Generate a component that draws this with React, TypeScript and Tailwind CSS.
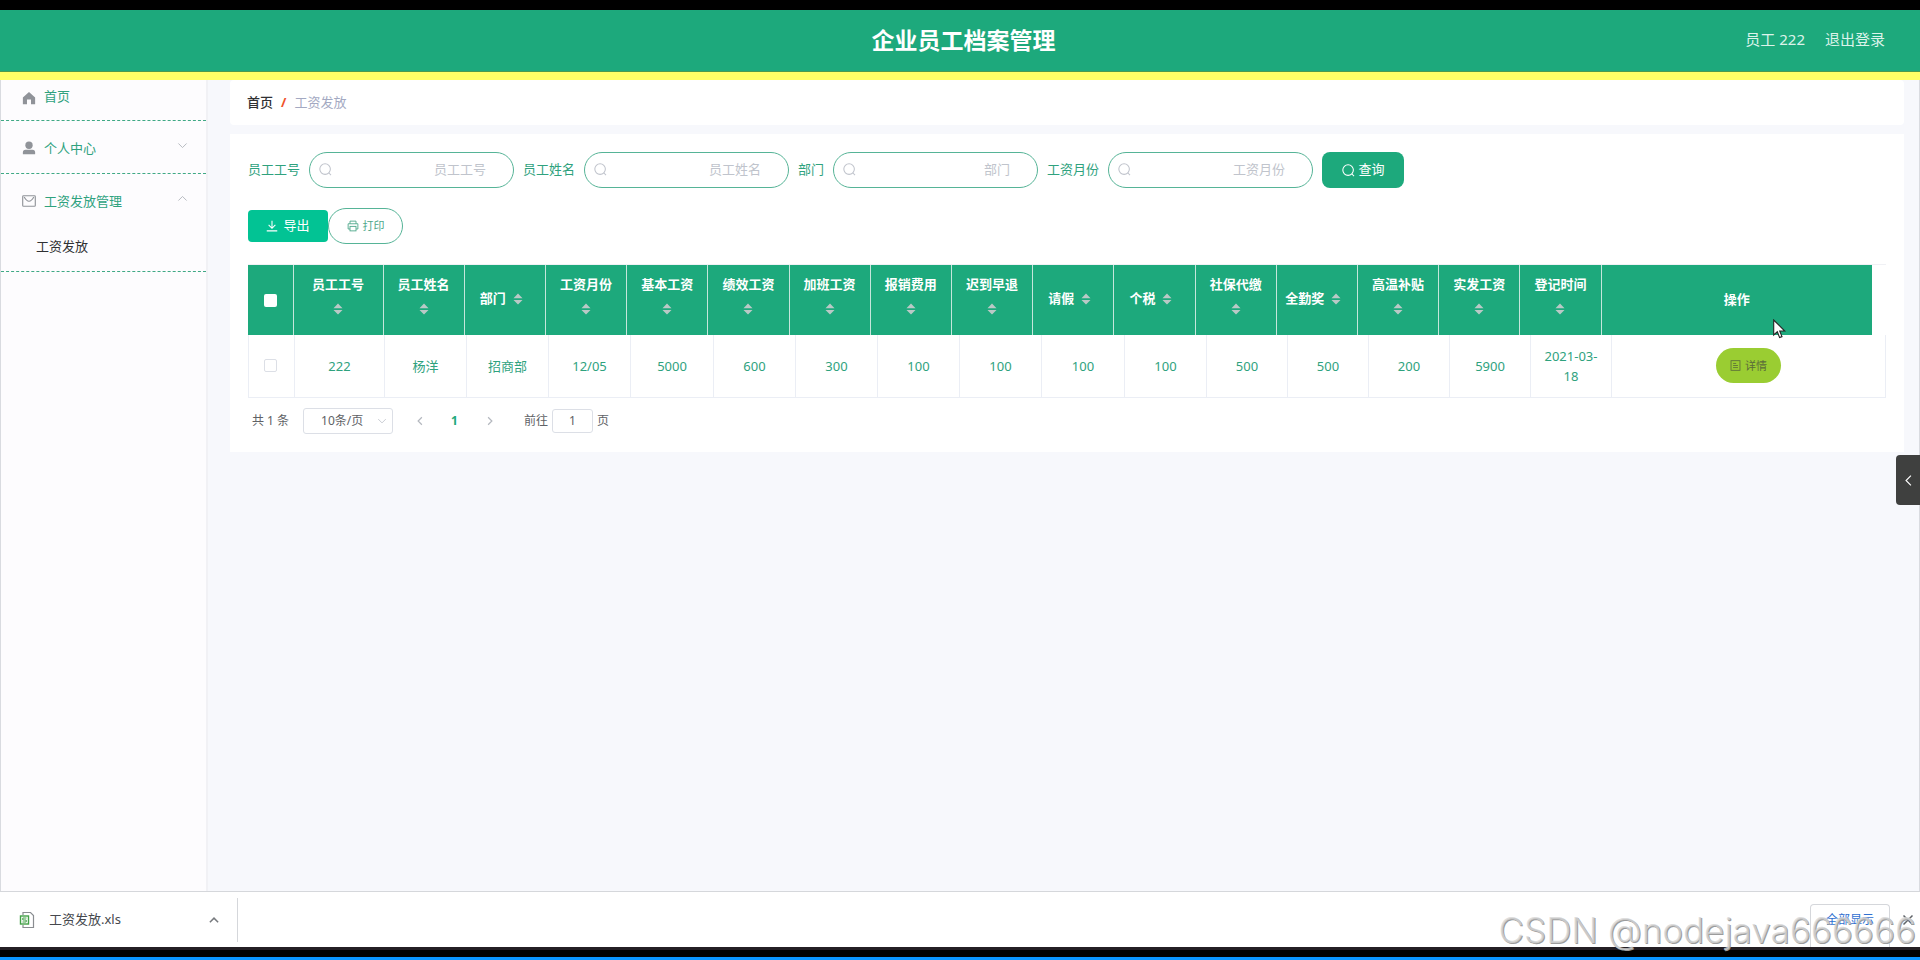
import { type FC, type ReactNode } from 'react'

interface Column {
  label: string
  value: string
  head: string
  body: string
}

const columns: Column[] = [
  { label: '员工工号', value: '222', head: 'w-[90px]', body: 'w-[90px]' },
  { label: '员工姓名', value: '杨洋', head: 'w-[5%]', body: 'w-[82px]' },
  { label: '部门', value: '招商部', head: 'w-[5%]', body: 'w-[82px]' },
  { label: '工资月份', value: '12/05', head: 'w-[5%]', body: 'w-[82px]' },
  { label: '基本工资', value: '5000', head: 'w-[5%]', body: 'w-[83px]' },
  { label: '绩效工资', value: '600', head: 'w-[5%]', body: 'w-[82px]' },
  { label: '加班工资', value: '300', head: 'w-[5%]', body: 'w-[82px]' },
  { label: '报销费用', value: '100', head: 'w-[5%]', body: 'w-[82px]' },
  { label: '迟到早退', value: '100', head: 'w-[5%]', body: 'w-[82px]' },
  { label: '请假', value: '100', head: 'w-[5%]', body: 'w-[83px]' },
  { label: '个税', value: '100', head: 'w-[5%]', body: 'w-[82px]' },
  { label: '社保代缴', value: '500', head: 'w-[5%]', body: 'w-[81px]' },
  { label: '全勤奖', value: '500', head: 'w-[5%]', body: 'w-[81px]' },
  { label: '高温补贴', value: '200', head: 'w-[5%]', body: 'w-[81px]' },
  { label: '实发工资', value: '5900', head: 'w-[5%]', body: 'w-[81px]' },
  { label: '登记时间', value: '2021-03-18', head: 'w-[5%]', body: 'w-[81px]' },
]

const filters = [
  { id: 'gonghao', label: '员工工号' },
  { id: 'xingming', label: '员工姓名' },
  { id: 'bumen', label: '部门' },
  { id: 'yuefen', label: '工资月份' },
]

const Line: FC<{ className: string; width?: number; children: ReactNode }> = ({ className, width = 1, children }) => (
  <svg viewBox="0 0 16 16" fill="none" stroke="currentColor" strokeWidth={width} className={className} aria-hidden="true">
    {children}
  </svg>
)

const SearchIcon: FC<{ className: string }> = ({ className }) => (
  <Line className={className} width={1.3}>
    <circle cx="7.5" cy="7.5" r="6.5" />
    <path d="M12 12 14.8 14.8" />
  </Line>
)

const SortCaret: FC = () => (
  <span className="inline-flex h-[30px] w-6 items-center justify-center align-middle">
    <svg viewBox="0 0 10 12" className="h-3 w-[10px] fill-[#b9c9c6]" aria-hidden="true">
      <path d="M5 0.5 9.5 5.3H0.5zM5 11.5 0.5 6.9H9.5z" />
    </svg>
  </span>
)

const Header: FC = () => (
  <header className="border-b-8 border-[#ffff66] bg-[#1da97c] text-white">
    <div className="grid h-[62px] grid-cols-[1fr_auto_1fr] items-center border-b border-[#4c9a4f] pb-[2px] pr-[35px]">
      <h1 className="col-start-2 pl-[42px] text-[23px] font-bold leading-8">企业员工档案管理</h1>
      <div className="flex justify-end gap-5 text-[15px] text-[#dcf3ea]">
        <span>员工 222</span>
        <a href="#logout">退出登录</a>
      </div>
    </div>
  </header>
)

const Sidebar: FC = () => (
  <nav className="w-[207px] shrink-0 border-r-2 border-[#f1f1f5] bg-[#fdfcfe] text-[13px] leading-5 text-[#2fa27e]">
    <a href="#home" className="flex h-[41px] items-center gap-2 border-b border-dashed border-[#3fa985] pb-2 pl-[21px]">
      <svg viewBox="0 0 16 16" className="mt-1 size-[14px] fill-[#909399]" aria-hidden="true">
        <path d="M8 1 15 7.3V15H10.3V9.8H5.7V15H1V7.3z" />
      </svg>
      首页
    </a>
    <a href="#me" className="flex h-[53px] items-center gap-2 border-b border-dashed border-[#3fa985] pl-[21px] pr-[18px] pt-px">
      <svg viewBox="0 0 16 16" className="size-[14px] fill-[#909399]" aria-hidden="true">
        <circle cx="8" cy="4.8" r="4.2" />
        <path d="M1 15V13Q1 10 4 10H12Q15 10 15 13V15z" />
      </svg>
      <span className="grow">个人中心</span>
      <Line className="mb-1 size-[11px] text-[#b5b8be]" width={1.4}><path d="M2 5 8 11 14 5" /></Line>
    </a>
    <div className="border-b border-dashed border-[#3fa985] pb-[15px]">
      <a href="#salary" className="flex h-[53px] items-center gap-2 pl-[21px] pr-[18px]">
        <Line className="size-[14px] text-[#909399]" width={1.3}>
          <rect x="0.8" y="2" width="14.4" height="12" rx="1" />
          <path d="M2.5 3.5Q8 13 13.5 3.5" />
        </Line>
        <span className="grow">工资发放管理</span>
        <Line className="mb-1 size-[11px] text-[#b5b8be]" width={1.4}><path d="M2 11 8 5 14 11" /></Line>
      </a>
      <a href="#salary-list" className="block pl-[35px] pt-[9px] text-[#303133]">工资发放</a>
    </div>
  </nav>
)

const FilterBar: FC = () => (
  <form className="flex flex-wrap items-center gap-[9px] text-[13px]">
    {filters.map(f => (
      <div key={f.id} className="flex items-center gap-[9px]">
        <label htmlFor={f.id} className="text-[#2fa27e]">{f.label}</label>
        <div className="relative">
          <SearchIcon className="absolute left-[10px] top-[11px] size-[13px] text-[#c0c4cc]" />
          <input
            id={f.id}
            placeholder={f.label}
            className="h-9 w-[205px] rounded-full border border-[#56b497] bg-white pb-[2px] pl-[30px] pr-[27px] text-right outline-none placeholder:text-[#c0c4cc]"
          />
        </div>
      </div>
    ))}
    <button type="button" className="flex h-9 w-[82px] items-center justify-center gap-1 rounded-lg bg-[#1da97c] text-white">
      <SearchIcon className="size-[13px]" />
      查询
    </button>
  </form>
)

const SalaryTable: FC = () => (
  <div className="border-t border-[#f0f1f5]">
    <div className="pr-[14px]">
      <table className="w-full table-fixed border-collapse bg-[#1da97c] text-[13px] leading-5 text-white">
        <thead>
          <tr className="h-[70px]">
            <th className="w-[45px] border-r border-[#c5e6db]">
              <input type="checkbox" aria-label="全选" className="mx-auto block size-[13px] appearance-none rounded-[2px] bg-white" />
            </th>
            {columns.map(c => (
              <th key={c.label} className={`${c.head} border-r border-[#c5e6db] px-2 pb-[2px] font-bold`}>
                {c.label}<SortCaret />
              </th>
            ))}
            <th className="pb-[2px] font-bold">操作</th>
          </tr>
        </thead>
      </table>
    </div>
    <table className="w-full table-fixed border-collapse text-center text-[13px] leading-5 text-[#2fa27e]">
      <tbody>
        <tr className="h-[62px]">
          <td className="w-[46px] border border-t-0 border-[#ebeef5] pr-[3px]">
            <input type="checkbox" aria-label="选择 222" className="mx-auto block size-[13px] appearance-none rounded-[2px] border border-[#dcdfe6] bg-white" />
          </td>
          {columns.map(c => (
            <td key={c.label} className={`${c.body} border border-t-0 border-[#ebeef5] px-2`}>{c.value}</td>
          ))}
          <td className="border border-t-0 border-[#ebeef5]">
            <button type="button" className="inline-flex h-[35px] w-[65px] items-center justify-center gap-1 rounded-full bg-[#9acd32] align-middle text-[11px] text-[#5a6b3a]">
              <Line className="size-[11px]" width={1.2}>
                <rect x="1.5" y="1" width="13" height="14" />
                <path d="M4.5 5H9M4.5 8H11.5M4.5 11H11.5" />
              </Line>
              详情
            </button>
          </td>
        </tr>
      </tbody>
    </table>
  </div>
)

const Pagination: FC = () => (
  <div className="flex items-center pl-1 pt-[10px] text-[12px] leading-4 text-[#606266]">
    <span>共 1 条</span>
    <div className="relative ml-[14px]">
      <select aria-label="每页条数" className="h-[26px] w-[90px] appearance-none rounded-[3px] border border-[#dcdfe6] bg-white pl-[17px]">
        <option>10条/页</option>
      </select>
      <Line className="pointer-events-none absolute right-[6px] top-2 size-[10px] text-[#c0c4cc]" width={1.4}><path d="M2 5 8 11 14 5" /></Line>
    </div>
    <button type="button" aria-label="上一页" className="ml-[21px] text-[#b4b8bf]">
      <Line className="size-3" width={1.6}><path d="M10.5 3 5.5 8 10.5 13" /></Line>
    </button>
    <button type="button" className="ml-[25px] font-bold text-[#1da97c]">1</button>
    <button type="button" aria-label="下一页" className="ml-[26px] text-[#b4b8bf]">
      <Line className="size-3" width={1.6}><path d="M5.5 3 10.5 8 5.5 13" /></Line>
    </button>
    <label htmlFor="page" className="ml-7">前往</label>
    <input id="page" defaultValue="1" className="mx-1 h-6 w-[41px] rounded-[3px] border border-[#dcdfe6] bg-white text-center outline-none" />
    <span>页</span>
  </div>
)

const DownloadBar: FC = () => (
  <footer className="flex h-14 items-center border-t border-[#d5d7db] bg-white pl-[18px] pr-[6px]">
    <svg viewBox="0 0 18 18" className="size-[18px]" fill="none" aria-hidden="true">
      <path d="M5 4V1.5H12.5L15.5 4.5V16.5H5V14" stroke="#8a8d91" strokeWidth="1.2" />
      <rect x="2.5" y="5" width="8" height="8" fill="#fff" stroke="#43a047" strokeWidth="1.4" />
      <path d="M8.5 7H4.8V9H8.2V11H4.5" stroke="#43a047" strokeWidth="1" />
    </svg>
    <span className="w-[172px] pl-[13px] text-[13px] text-[#45484d]">工资发放.xls</span>
    <button type="button" aria-label="更多" className="mr-[17px] text-[#777a7e]">
      <Line className="size-3" width={2}><path d="M2.5 11 8 5.5 13.5 11" /></Line>
    </button>
    <div className="h-11 border-l border-[#d5d7db]" />
    <button type="button" className="ml-auto mt-3 h-11 w-20 rounded-t border border-b-0 border-[#d5d7db] pb-3 text-[12px] text-[#2f6fd0]">全部显示</button>
    <button type="button" aria-label="关闭" className="ml-3 text-[#5f6368]">
      <Line className="size-3" width={2}><path d="M2 2 14 14M14 2 2 14" /></Line>
    </button>
  </footer>
)

export default function App() {
  return (
    <div className="relative flex min-h-screen flex-col overflow-hidden border-t-[10px] border-black bg-[#f7f8fc] font-['Noto_Sans','Noto_Sans_CJK_SC',sans-serif]">
      <Header />
      <div className="flex grow border-x border-[#d9dbe0]">
        <Sidebar />
        <main className="min-w-0 grow pl-[22px] pr-[15px]">
          <div className="flex h-[45px] items-center gap-2 rounded bg-white pl-[17px] text-[13px]">
            <a href="#home" className="font-medium text-[#303133]">首页</a>
            <span className="font-bold text-[#f0522b]">/</span>
            <span className="text-[#a3a9c2]">工资发放</span>
          </div>
          <section className="mt-[9px] bg-white px-[18px] pb-[18px] pt-[18px]">
            <FilterBar />
            <div className="my-5 flex items-center">
              <button type="button" className="flex h-8 w-20 items-center justify-center gap-[5px] rounded bg-[#02c394] text-[13px] text-white">
                <Line className="size-3" width={1.4}><path d="M8 1V10.5M3.5 6.5 8 11 12.5 6.5M1 14.5H15" /></Line>
                导出
              </button>
              <button type="button" className="flex h-9 w-[75px] items-center justify-center gap-1 rounded-full border border-[#56b497] text-[11px] text-[#4fa88b]">
                <Line className="size-3" width={1.2}>
                  <path d="M4 5V1.5H12V5M4 12H1.5V5H14.5V12H12" />
                  <rect x="4" y="8.5" width="8" height="6" />
                </Line>
                打印
              </button>
            </div>
            <SalaryTable />
            <Pagination />
          </section>
        </main>
      </div>
      <DownloadBar />
      <div className="h-[13px] border-b-[3px] border-t-[3px] border-b-[#0a95ff] border-t-[#241f24] bg-black" />

      <button type="button" aria-label="展开" className="absolute right-0 top-[445px] flex h-[50px] w-6 items-center justify-center rounded-l-sm bg-[#3f403f] text-white">
        <Line className="size-[13px]" width={1.4}><path d="M11 2 5 8 11 14" /></Line>
      </button>
      <svg viewBox="0 0 13 20" className="absolute left-[1773px] top-[309px] h-5 w-[13px]" aria-hidden="true">
        <path d="M0.7 1V16L4.3 12.8L6.6 18.6L9 17.6L6.7 12H11.8z" fill="#fff" stroke="#222" strokeWidth="1.1" />
      </svg>
      <div className="pointer-events-none absolute bottom-[5px] right-1 font-['Inter',sans-serif] text-[35px] font-light leading-[50px] text-[#d6d6d6]/80 [text-shadow:1px_1px_0_#9c9c9c]">
        CSDN @nodejava666666
      </div>
    </div>
  )
}
